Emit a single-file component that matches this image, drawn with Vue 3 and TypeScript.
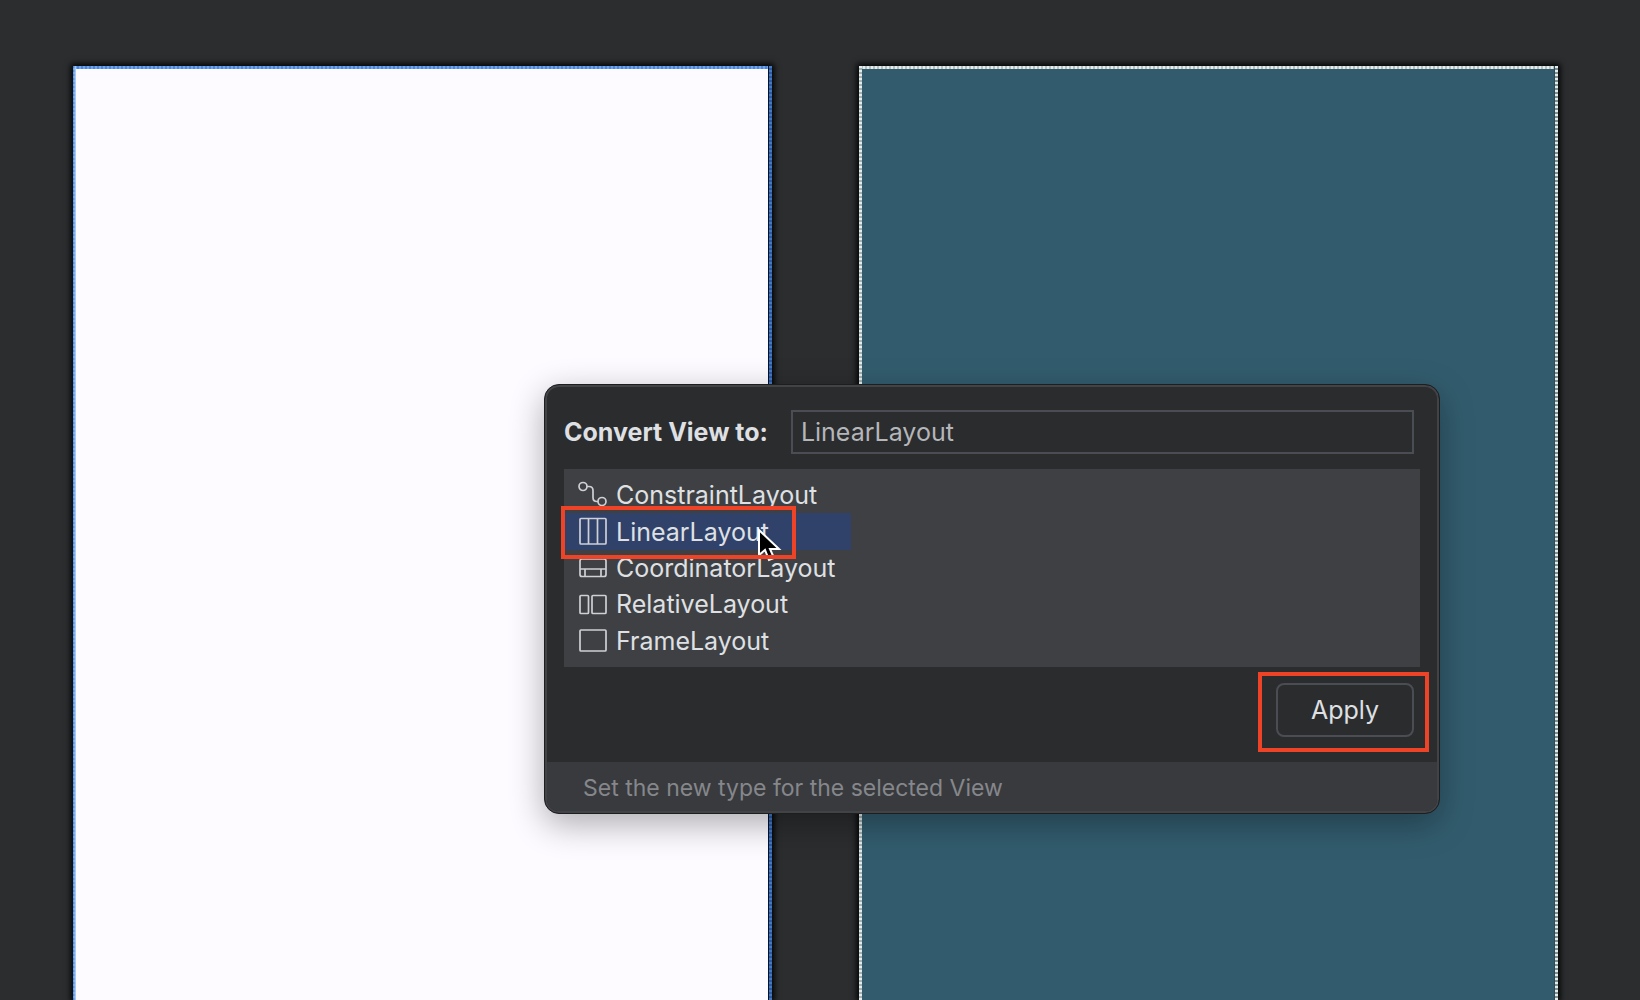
<script setup lang="ts">
import { ref } from 'vue'

type IconName = 'constraint' | 'linear' | 'coordinator' | 'relative' | 'frame'

interface LayoutOption {
  name: string
  icon: IconName
}

const options: LayoutOption[] = [
  { name: 'ConstraintLayout', icon: 'constraint' },
  { name: 'LinearLayout', icon: 'linear' },
  { name: 'CoordinatorLayout', icon: 'coordinator' },
  { name: 'RelativeLayout', icon: 'relative' },
  { name: 'FrameLayout', icon: 'frame' },
]

const target = ref('LinearLayout')
</script>

<template>
  <main class="canvas">
    <section class="surface design" aria-label="Design surface"></section>
    <section class="surface blueprint" aria-label="Blueprint surface"></section>

    <form class="dialog" role="dialog" aria-label="Convert View" @submit.prevent>
      <div class="target-row">
        <label for="target" class="target-label">Convert View to:</label>
        <input id="target" v-model="target" class="target-input" type="text" spellcheck="false" />
      </div>

      <div class="list">
        <ul class="options">
          <li v-for="o in options" :key="o.name" class="item">
            <button
              type="button"
              class="option"
              :class="{ selected: o.name === target }"
              @click="target = o.name"
            >
              <svg class="icon" viewBox="0 0 32 32" aria-hidden="true">
                <g v-if="o.icon === 'constraint'">
                  <circle cx="6" cy="7.500" r="4" />
                  <circle cx="25" cy="22.500" r="4" />
                  <path d="M10 7.500h2q4 0 4 4v7q0 4 4 4h1" />
                </g>
                <g v-else-if="o.icon === 'linear'">
                  <rect x="3" y="2.500" width="26" height="25.500" rx="1" />
                  <path d="M11.500 3v25M20.500 3v25" />
                </g>
                <g v-else-if="o.icon === 'coordinator'">
                  <rect x="3" y="7" width="26" height="17.500" rx="2" />
                  <path d="M3 17h26M8 17v7.500M24 17v7.500" />
                </g>
                <g v-else-if="o.icon === 'relative'">
                  <rect x="3" y="7.500" width="8.500" height="18" rx="1" />
                  <rect x="15" y="7.500" width="14" height="18" rx="1" />
                </g>
                <g v-else>
                  <rect x="3" y="5" width="26" height="21" rx="1" />
                </g>
              </svg>
              <span>{{ o.name }}</span>
            </button>
            <template v-if="o.icon === 'linear'">
              <svg class="pointer" viewBox="0 0 28 40" aria-hidden="true">
                <path d="M3 3v25l6-5 4 10 5-2-4-9h9z" />
              </svg>
              <span class="mark mark-option"></span>
            </template>
          </li>
        </ul>
      </div>

      <div class="actions">
        <div class="apply-wrap">
          <button type="submit" class="apply">Apply</button>
          <span class="mark mark-apply"></span>
        </div>
      </div>

      <footer class="hint">Set the new type for the selected View</footer>
    </form>
  </main>
</template>

<style>
body {
  margin: 0;
  background: #2b2d2f;
}
</style>

<style scoped>
.canvas {
  position: relative;
  box-sizing: border-box;
  display: flex;
  gap: 87px;
  min-height: 100vh;
  padding: 66px 82px 0 73px;
  overflow: hidden;
  background: #2b2d2f;
  font-family: Inter, 'Liberation Sans', sans-serif;
  font-size: 25px;
  line-height: 32px;
  color: #dfe0e3;
}

.surface {
  flex: 1;
  padding: 3px 4px 0 3px;
  box-shadow: 0 0 6px 2px #000;
}

.design {
  background:
    linear-gradient(#fdfbff, #fdfbff) content-box,
    linear-gradient(90deg, transparent, #b4d6ff) left / 3px 100% no-repeat,
    repeating-linear-gradient(180deg, #3c78d0 0 2px, #5f98e4 2px 4px) left / 3px 100% no-repeat,
    repeating-linear-gradient(180deg, #4479c4 0 2px, #2c58a4 2px 4px) right / 3px 100% no-repeat,
    linear-gradient(#0a1220, #0a1220) right / 4px 100% no-repeat,
    repeating-linear-gradient(90deg, #4a86dc 0 2px, #6ea4ee 2px 4px);
}

.blueprint {
  background:
    linear-gradient(#325c6e, #325c6e) content-box,
    repeating-linear-gradient(180deg, #e4eceb 0 2px, #a3b1b1 2px 4px) left / 3px 100% no-repeat,
    repeating-linear-gradient(180deg, #e4eceb 0 2px, #7f8f90 2px 4px) right / 3px 100% no-repeat,
    linear-gradient(#2a4a58, #2a4a58) right / 4px 100% no-repeat,
    repeating-linear-gradient(90deg, #e4eceb 0 2px, #b4c0c0 2px 4px);
}

.dialog {
  position: absolute;
  top: 384px;
  left: 544px;
  right: 200px;
  box-sizing: border-box;
  border: 1px solid #1d1e20;
  border-radius: 15px;
  background: #2b2c2e;
  box-shadow:
    inset 0 0 0 2px #424347,
    0 10px 34px rgba(0, 0, 0, 0.32);
}

.target-row {
  display: flex;
  align-items: center;
  gap: 23px;
  padding: 25px 25px 0 19px;
}

.target-label {
  font-weight: 700;
}

.target-input {
  flex: 1;
  min-width: 0;
  box-sizing: border-box;
  height: 44px;
  padding: 0 8px;
  border: 2px solid #4b4d54;
  border-radius: 0;
  outline: none;
  background: transparent;
  font: inherit;
  color: #b4b6ba;
}

.list {
  margin: 15px 19px 0;
  padding: 8px 0;
  background: #3f4043;
}

.options {
  display: flex;
  flex-direction: column;
  width: max-content;
  height: 182px;
  margin: 0;
  padding: 0;
  list-style: none;
}

.item {
  position: relative;
  display: flex;
  flex: 1;
}

.option {
  display: flex;
  flex: 1;
  align-items: center;
  gap: 7px;
  padding: 0 16px 0 13px;
  border: 0;
  background: transparent;
  font: inherit;
  color: inherit;
}

.option.selected {
  background: #30416a;
}

.icon {
  width: 32px;
  height: 32px;
  fill: none;
  stroke: #ced0d6;
  stroke-width: 1.700;
}

.pointer {
  position: absolute;
  top: 14px;
  left: 192px;
  z-index: 1;
  width: 28px;
  height: 40px;
  fill: #000;
  stroke: #fff;
  stroke-width: 2;
}

.mark {
  position: absolute;
  z-index: 2;
  box-sizing: border-box;
  border: 4px solid #ee4327;
  pointer-events: none;
}

.mark-option {
  top: -7px;
  left: -3px;
  width: 235px;
  height: 53px;
}

.actions {
  display: flex;
  justify-content: flex-end;
  padding: 16px 25px 25px;
}

.apply-wrap {
  position: relative;
}

.apply {
  box-sizing: border-box;
  width: 138px;
  height: 54px;
  padding: 0;
  border: 2px solid #4b4d54;
  border-radius: 8px;
  background: transparent;
  font: inherit;
  color: inherit;
}

.mark-apply {
  inset: -11px -15px -15px -18px;
}

.hint {
  margin: 0 2px 2px;
  padding: 10px 36px 7px;
  border-radius: 0 0 12px 12px;
  background: #393a3e;
  font-size: 23px;
  color: #85878b;
}
</style>
